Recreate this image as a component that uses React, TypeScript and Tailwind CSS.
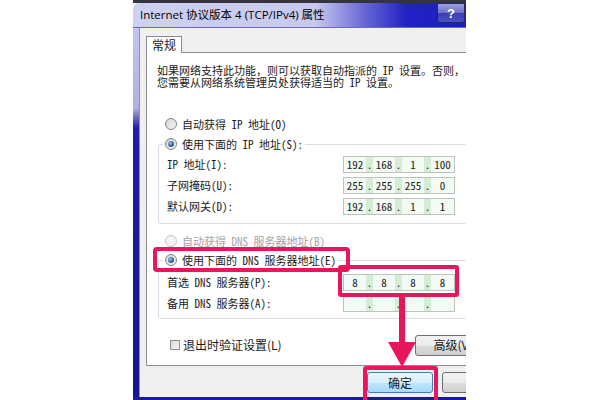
import React from 'react';

// SimSun-like text: half-width latin, full-width CJK
const mono = "font-['Noto_Sans_Mono_CJK_SC','Noto_Sans_CJK_SC',monospace]";
const ui = "font-['Noto_Sans_CJK_SC','Open_Sans',sans-serif]";

function Radio({ checked = false, disabled = false }: { checked?: boolean; disabled?: boolean }) {
  return (
    <span
      className={`flex items-center justify-center w-[12px] h-[12px] rounded-full border shrink-0 ${
        disabled
          ? 'border-[#c4c4c4] bg-[#f4f4f4]'
          : 'border-[#7f8586] bg-[linear-gradient(135deg,#d6d6d6,#f6f6f6)]'
      }`}
    >
      {checked && (
        <span className="w-[6px] h-[6px] rounded-full bg-[radial-gradient(circle_at_35%_35%,#9ec3ee,#1d4f90_70%)]" />
      )}
    </span>
  );
}

function IpField({ parts }: { parts: string[] }) {
  return (
    <div className={`flex h-[17px] border border-[#b9c6b9] bg-[#f4faf4] text-[11px] text-[#222] ${mono}`}>
      {parts.map((p, i) => (
        <React.Fragment key={i}>
          {i > 0 && (
            <span className="w-[7px] flex items-center justify-center bg-[#d5ecd5] leading-none">.</span>
          )}
          <span className={`${i === 3 ? 'w-[23px]' : 'w-[22px]'} flex items-center justify-center leading-none`}>
            {p}
          </span>
        </React.Fragment>
      ))}
    </div>
  );
}

function FieldRow({ label, parts }: { label: string; parts: string[] }) {
  return (
    <div className="flex items-center h-[21px] pl-[4px]">
      <span className="w-[176px] shrink-0 whitespace-nowrap">{label}</span>
      <IpField parts={parts} />
    </div>
  );
}

function WinButton({ label, width, primary = false }: { label: string; width: string; primary?: boolean }) {
  return (
    <div
      className={`${width} h-[21px] shrink-0 flex items-center justify-center rounded-[3px] border text-[12px] text-[#1a1a1a] whitespace-nowrap ${ui} ${
        primary
          ? 'border-[#3c7fb1] bg-[linear-gradient(to_bottom,#eaf6fd_0%,#d9f0fc_50%,#bee6fd_51%,#a7d9f5_100%)]'
          : 'border-[#707070] bg-[linear-gradient(to_bottom,#f2f2f2_0%,#ebebeb_50%,#dddddd_51%,#cfcfcf_100%)]'
      }`}
    >
      {label}
    </div>
  );
}

export default function App() {
  return (
    <div className="relative w-[600px] h-[400px] bg-white overflow-hidden">
      <div className="ml-[133px] w-[333px] h-[400px] flex flex-col overflow-hidden">
        {/* edge of the window behind */}
        <div className="h-[3px] bg-[#34343f] shrink-0" />

        {/* caption */}
        <div className="h-[25px] shrink-0 flex items-start rounded-tl-[6px] border-b border-[#6a6ac0] bg-[linear-gradient(to_right,#cfd1f0_0%,#c6c8ee_55%,#6464d4_70%,#2222c4_82%,#1c1cc0_100%)]">
          <span className="pl-[7px] pt-[4px] text-[11.5px] leading-[16px] text-black whitespace-nowrap font-['Open_Sans','Noto_Sans_CJK_SC',sans-serif]">
            Internet 协议版本 4 (TCP/IPv4) 属性
          </span>
          <div className="ml-auto mr-[1px] w-[28px] h-[20px] rounded-b-[3px] border border-[#27276c] bg-[linear-gradient(to_bottom,#9aa0dc_0%,#6a70c8_50%,#3a3eb0_51%,#4a50c0_100%)] flex items-center justify-center text-white font-bold text-[13px] leading-none font-['Liberation_Sans',sans-serif]">
            ?
          </div>
        </div>

        <div className="flex flex-1 min-h-0">
          {/* left frame */}
          <div className="w-[7px] shrink-0 border-r border-[#8c8cc8] bg-[linear-gradient(to_bottom,#c2c5ec_0px,#aeb2e2_80px,#1e1ea4_100px,#15158e_100%)]" />

          <div className="flex-1 min-w-0 bg-[#f0f0f0] flex flex-col pl-[6px] overflow-hidden">
            {/* tab strip */}
            <div className="h-[24px] shrink-0 flex items-end">
              <div className={`relative z-10 -mb-px h-[17px] px-[5px] bg-white border-t border-l border-r border-[#898c95] flex items-center text-[12px] text-[#1a1a1a] ${ui}`}>
                常规
              </div>
            </div>

            {/* tab page */}
            <div className={`w-[360px] h-[314px] shrink-0 bg-white border-t border-l border-b border-[#898c95] text-[11px] text-[#1a1a1a] ${mono}`}>
              <div className="mt-[11px] pl-[10px] leading-[12px] whitespace-nowrap">
                <div>如果网络支持此功能，则可以获取自动指派的 IP 设置。否则，</div>
                <div>您需要从网络系统管理员处获得适当的 IP 设置。</div>
              </div>

              <div className="mt-[26px] h-[20px] pl-[18px] flex items-center gap-[5px] whitespace-nowrap">
                <Radio />
                <span>自动获得 IP 地址(O)</span>
              </div>

              <fieldset className="ml-[11px] border border-[#d5dfe5] rounded-[3px] px-[4px] pb-[6px]">
                <legend className="px-[2px]">
                  <span className="h-[20px] flex items-center gap-[5px] whitespace-nowrap">
                    <Radio checked />
                    <span>使用下面的 IP 地址(S):</span>
                  </span>
                </legend>
                <FieldRow label="IP 地址(I):" parts={['192', '168', '1', '100']} />
                <FieldRow label="子网掩码(U):" parts={['255', '255', '255', '0']} />
                <FieldRow label="默认网关(D):" parts={['192', '168', '1', '1']} />
              </fieldset>

              <div className="mt-[8px] h-[18px] pl-[18px] flex items-center gap-[5px] whitespace-nowrap text-[#a3a3a3]">
                <Radio disabled />
                <span>自动获得 DNS 服务器地址(B)</span>
              </div>

              <fieldset className="ml-[11px] border border-[#d5dfe5] rounded-[3px] px-[4px] pt-[2px] pb-[4px]">
                <legend className="px-[2px]">
                  <span className="h-[20px] flex items-center gap-[5px] whitespace-nowrap">
                    <Radio checked />
                    <span>使用下面的 DNS 服务器地址(E)</span>
                  </span>
                </legend>
                <FieldRow label="首选 DNS 服务器(P):" parts={['8', '8', '8', '8']} />
                <FieldRow label="备用 DNS 服务器(A):" parts={['', '', '', '']} />
              </fieldset>

              <div className="mt-[16px] h-[20px] flex items-center">
                <div className={`w-[268px] shrink-0 pl-[23px] flex items-center gap-[3px] text-[12px] whitespace-nowrap ${ui}`}>
                  <span className="w-[10px] h-[10px] border border-[#8e8f8f] bg-[linear-gradient(135deg,#dcdcdc,#f4f4f4)]" />
                  <span>退出时验证设置(L)</span>
                </div>
                <WinButton label="高级(V)..." width="w-[86px]" />
              </div>
            </div>

            {/* dialog buttons */}
            <div className="mt-[6px] ml-[221px] flex gap-[9px]">
              <WinButton label="确定" width="w-[66px]" primary />
              <WinButton label="取消" width="w-[75px]" />
            </div>
          </div>
        </div>

        <div className="h-[3px] shrink-0 bg-[#1a1a9a]" />
      </div>

      {/* red callouts */}
      <div className="absolute left-[153px] top-[247px] w-[197px] h-[25px] border-[4px] border-[#e8175d] rounded-[4px]" />
      <div className="absolute left-[338px] top-[265px] w-[121px] h-[32px] border-[4px] border-[#e8175d] rounded-[3px]" />
      <svg className="absolute left-[386px] top-[296px]" width="32" height="72" viewBox="0 0 32 72">
        <rect x="13" y="0" width="6" height="50" fill="#e8175d" />
        <polygon points="2,46 30,46 16,71" fill="#e8175d" />
      </svg>
      <div className="absolute left-[363px] top-[366px] w-[75px] h-[38px] border-[4px] border-[#e8175d] rounded-[3px]" />
    </div>
  );
}
